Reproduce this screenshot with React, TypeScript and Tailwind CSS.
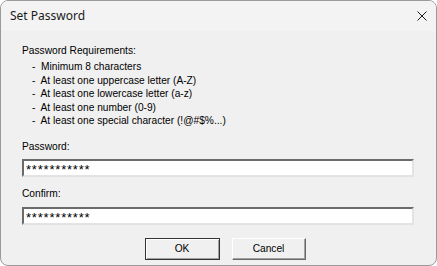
export default function App() {
  const rules = [
    'Minimum 8 characters',
    'At least one uppercase letter (A-Z)',
    'At least one lowercase letter (a-z)',
    'At least one number (0-9)',
    'At least one special character (!@#$%...)',
  ]

  return (
    <div className="w-[437px] h-[266px] bg-white">
      <div className="w-[437px] h-[266px] rounded-[8px] border border-[#9a9a9a] bg-[#f0f0f0] overflow-hidden flex flex-col font-['Liberation_Sans',sans-serif] text-[10.2px] text-black">
        {/* Title bar */}
        <div className="h-[30px] shrink-0 bg-[#f3f3f3] flex items-center justify-between pl-[9px] pr-[9px]">
          <span className="font-['Noto_Sans',sans-serif] text-[12px] text-[#1a1a1a]">Set Password</span>
          <svg width="10" height="10" viewBox="0 0 10 10">
            <path d="M0.5 0.5L9.5 9.5M9.5 0.5L0.5 9.5" stroke="#1a1a1a" strokeWidth="1" />
          </svg>
        </div>

        {/* Body */}
        <div className="flex-1 flex flex-col px-[21px] pt-[13px]">
          <div className="leading-[13.5px]">Password Requirements:</div>
          <ul className="mt-[2.5px] pl-[10px] leading-[13.5px]">
            {rules.map((r) => (
              <li key={r}>-&nbsp; {r}</li>
            ))}
          </ul>

          <div className="mt-[12.5px] leading-[13.5px]">Password:</div>
          <div className="mt-[5px] h-[18px] w-[392px] border-2 border-t-[#6b6b6b] border-l-[#6b6b6b] border-b-[#e3e3e3] border-r-[#e3e3e3] bg-white flex items-center pl-[2px] text-[13px] tracking-[0.8px] leading-none pt-[3px]">
            ***********
          </div>

          <div className="mt-[10px] leading-[13.5px]">Confirm:</div>
          <div className="mt-[6.5px] h-[18px] w-[392px] border-2 border-t-[#6b6b6b] border-l-[#6b6b6b] border-b-[#e3e3e3] border-r-[#e3e3e3] bg-white flex items-center pl-[2px] text-[13px] tracking-[0.8px] leading-none pt-[3px]">
            ***********
          </div>

          <div className="mt-[13px] flex justify-center gap-[12px] pl-[13px]">
            <button className="w-[75px] h-[22px] border border-[#333333] bg-[#f0f0f0] shadow-[inset_1px_1px_0_#ffffff,inset_-1px_-1px_0_#a0a0a0] flex items-center justify-center">
              OK
            </button>
            <button className="w-[74px] h-[22px] border border-t-white border-l-white border-b-[#696969] border-r-[#696969] bg-[#f0f0f0] shadow-[inset_-1px_-1px_0_#a0a0a0] flex items-center justify-center">
              Cancel
            </button>
          </div>
        </div>
      </div>
    </div>
  )
}
